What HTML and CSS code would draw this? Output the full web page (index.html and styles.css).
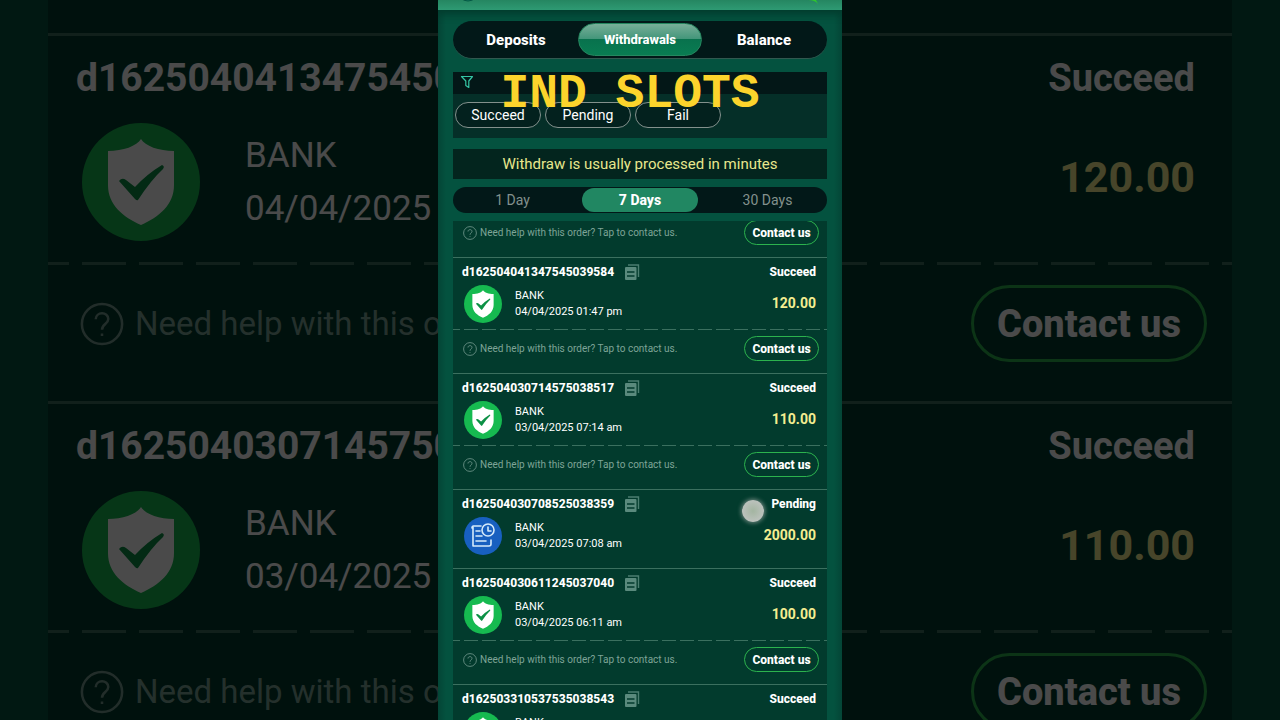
FILE: index.html
```html
<!DOCTYPE html>
<html lang="en">
<head>
  <meta charset="UTF-8" />
  <title>Withdrawals</title>
  <meta name="viewport" content="width=device-width, initial-scale=1.0" />
  <link rel="stylesheet" href="styles.css">
</head>
<body>
  <svg class="symbols" aria-hidden="true">
    <symbol id="shield" viewBox="0 0 118 118">
      <circle cx="59" cy="59" r="59" fill="#16ba50" />
      <path d="M59 16 C63 23 77 28 92 28 V62 C92 82 77 94 59 102 C41 94 26 82 26 62 V28 C41 28 55 23 59 16 Z" fill="#fff" />
      <path d="M37 58 Q40 54 44 57 L53 64 Q65 51 80 42 Q83 43 81 46 Q69 57 56 77 Q55 78 53 76 Z" fill="#0c9045" />
    </symbol>
    <symbol id="pending" viewBox="0 0 38 38">
      <circle cx="19" cy="19" r="19" fill="#1860c0" />
      <g fill="none" stroke="#d5eafa" stroke-width="1.6" stroke-linecap="round" stroke-linejoin="round">
        <path d="M17 9 H10 Q8 9 8 11 M9 9 V29 H25 Q27 29 27 27 V23 M12 24 H22 M12 19 H18 M12 14 H16" />
        <circle cx="24" cy="13" r="6" />
        <path d="M24 10 V14 H27" />
      </g>
    </symbol>
    <symbol id="copy" viewBox="0 0 16 16">
      <path d="M4 1 H14.5 V13" fill="none" stroke="#4b7e70" stroke-width="1.4" />
      <rect x="1" y="3" width="11.5" height="13" rx="1" fill="#5a8a7d" />
      <path d="M3 8 H10.5 M3 12 H10.5" stroke="#033b2e" stroke-width="1.5" />
    </symbol>
    <symbol id="help" viewBox="0 0 14 14">
      <circle cx="7" cy="7" r="6.4" fill="none" stroke="#769c90" stroke-width=".8" />
      <path d="M5 5.5 C5 3 9 3 9 5.4 C9 7 7 7 7 8.8 M7 10 V10.8" fill="none" stroke="#769c90" stroke-width=".8" />
    </symbol>
  </svg>

  <div class="stage">
    <div class="backdrop" aria-hidden="true">
      <div class="orders">
        <div class="order">
          <div class="order-head"><span>d162504041347545039584</span><span class="status">Succeed</span></div>
          <div class="order-body">
            <svg class="order-icon"><use href="#shield" /></svg>
            <p>BANK<br>04/04/2025 01:47 pm</p>
            <strong class="amount">120.00</strong>
          </div>
          <div class="order-help">
            <svg class="help-icon"><use href="#help" /></svg>
            <span>Need help with this order? Tap to contact us.</span>
            <span class="contact">Contact us</span>
          </div>
        </div>
        <div class="order">
          <div class="order-head"><span>d162504030714575038517</span><span class="status">Succeed</span></div>
          <div class="order-body">
            <svg class="order-icon"><use href="#shield" /></svg>
            <p>BANK<br>03/04/2025 07:14 am</p>
            <strong class="amount">110.00</strong>
          </div>
          <div class="order-help">
            <svg class="help-icon"><use href="#help" /></svg>
            <span>Need help with this order? Tap to contact us.</span>
            <span class="contact">Contact us</span>
          </div>
        </div>
      </div>
    </div>

    <main class="phone">
      <header class="topbar">
        <svg viewBox="0 0 404 10">
          <circle cx="30" cy="-9" r="10" fill="#0a8063" stroke="#065744" />
          <path d="M370 0 Q377 0 380 4 L378 0 Z" fill="#2fc52e" />
        </svg>
      </header>

      <nav class="tabs">
        <button>Deposits</button>
        <button class="active">Withdrawals</button>
        <button>Balance</button>
      </nav>

      <section class="filter">
        <div class="filter-head">
          <svg viewBox="0 0 14 14"><path d="M1.5 1.5 H12.5 L8.8 6 V12.5 L5.8 10.5 V6 Z" fill="none" stroke="#35c4a4" stroke-width="1.2" stroke-linejoin="round" /></svg>
        </div>
        <div class="filter-pills">
          <button>Succeed</button>
          <button>Pending</button>
          <button>Fail</button>
        </div>
      </section>

      <p class="notice">Withdraw is usually processed in minutes</p>

      <nav class="days">
        <button>1 Day</button>
        <button class="active">7 Days</button>
        <button>30 Days</button>
      </nav>

      <section class="orders">
        <div class="order scrolled">
          <div class="order-help">
            <svg class="help-icon"><use href="#help" /></svg>
            <span>Need help with this order? Tap to contact us.</span>
            <button class="contact">Contact us</button>
          </div>
        </div>

        <article class="order">
          <div class="order-head">
            <span>d162504041347545039584</span>
            <button class="copy" aria-label="Copy"><svg><use href="#copy" /></svg></button>
            <span class="status">Succeed</span>
          </div>
          <div class="order-body">
            <svg class="order-icon"><use href="#shield" /></svg>
            <p>BANK<br>04/04/2025 01:47 pm</p>
            <strong class="amount">120.00</strong>
          </div>
          <div class="order-help">
            <svg class="help-icon"><use href="#help" /></svg>
            <span>Need help with this order? Tap to contact us.</span>
            <button class="contact">Contact us</button>
          </div>
        </article>

        <article class="order">
          <div class="order-head">
            <span>d162504030714575038517</span>
            <button class="copy" aria-label="Copy"><svg><use href="#copy" /></svg></button>
            <span class="status">Succeed</span>
          </div>
          <div class="order-body">
            <svg class="order-icon"><use href="#shield" /></svg>
            <p>BANK<br>03/04/2025 07:14 am</p>
            <strong class="amount">110.00</strong>
          </div>
          <div class="order-help">
            <svg class="help-icon"><use href="#help" /></svg>
            <span>Need help with this order? Tap to contact us.</span>
            <button class="contact">Contact us</button>
          </div>
        </article>

        <article class="order is-pending">
          <div class="order-head">
            <span>d162504030708525038359</span>
            <button class="copy" aria-label="Copy"><svg><use href="#copy" /></svg></button>
            <span class="status">Pending</span>
          </div>
          <div class="order-body">
            <svg class="order-icon"><use href="#pending" /></svg>
            <p>BANK<br>03/04/2025 07:08 am</p>
            <strong class="amount">2000.00</strong>
          </div>
          <span class="touch"></span>
        </article>

        <article class="order">
          <div class="order-head">
            <span>d162504030611245037040</span>
            <button class="copy" aria-label="Copy"><svg><use href="#copy" /></svg></button>
            <span class="status">Succeed</span>
          </div>
          <div class="order-body">
            <svg class="order-icon"><use href="#shield" /></svg>
            <p>BANK<br>03/04/2025 06:11 am</p>
            <strong class="amount">100.00</strong>
          </div>
          <div class="order-help">
            <svg class="help-icon"><use href="#help" /></svg>
            <span>Need help with this order? Tap to contact us.</span>
            <button class="contact">Contact us</button>
          </div>
        </article>

        <article class="order">
          <div class="order-head">
            <span>d162503310537535038543</span>
            <button class="copy" aria-label="Copy"><svg><use href="#copy" /></svg></button>
            <span class="status">Succeed</span>
          </div>
          <div class="order-body">
            <svg class="order-icon"><use href="#shield" /></svg>
            <p>BANK<br>31/03/2025</p>
          </div>
        </article>
      </section>

      <h1 class="caption">IND SLOTS</h1>
    </main>
  </div>
</body>
</html>
```

FILE: styles.css
```css
* {
  box-sizing: border-box;
  margin: 0;
  padding: 0;
}

body {
  font-family: Roboto, "Liberation Sans", sans-serif;
  background: #000;
  color: #fff;
}

button {
  border: none;
  background: none;
  color: inherit;
  font-family: inherit;
  cursor: pointer;
}

.symbols {
  position: absolute;
  width: 0;
  height: 0;
}

.stage {
  display: grid;
  grid-template-columns: minmax(0, 1fr);
  grid-template-rows: 100vh;
  height: 100vh;
  overflow: hidden;
}

.backdrop,
.phone {
  grid-area: 1 / 1;
  overflow: hidden;
}

/* phone screen */
.phone {
  position: relative;
  justify-self: center;
  display: flex;
  flex-direction: column;
  width: 404px;
  max-width: 100%;
  padding: 0 15px;
  background: linear-gradient(90deg, #044536, #04523f 2%, #04523f 98%, #044536);
}

.topbar {
  flex: none;
  height: 10px;
  margin: 0 -15px 11px;
  background: linear-gradient(#258661, #2e9a73);
  box-shadow: 0 1px 8px 3px #023a2c;
}

.topbar svg {
  display: block;
}

.tabs,
.days {
  flex: none;
  display: grid;
  background: #021818;
}

.tabs {
  grid-template-columns: repeat(3, 1fr);
  height: 38px;
  padding: 2px 1px;
  border-radius: 19px;
  border-bottom: 1px solid #31584f;
  margin-bottom: 13px;
}

.tabs button {
  font-size: 15px;
  font-weight: 800;
  border-radius: 17px;
}

.tabs .active {
  font-size: 13px;
  background: linear-gradient(#78ae98, #43967a 48%, #08724d 50%, #097c52);
  border: 1px solid #25875f;
}

.filter {
  flex: none;
  background: #052f28;
  margin-bottom: 11px;
}

.filter-head {
  height: 22px;
  padding: 3px 7px;
  background: #031717;
}

.filter-head svg {
  display: block;
  width: 14px;
  height: 14px;
}

.filter-pills {
  display: flex;
  gap: 4px;
  padding: 8px 2px 10px;
}

.filter-pills button {
  width: 86px;
  height: 26px;
  font-size: 14px;
  background: #03211e;
  border: 1px solid #83918d;
  border-radius: 13px;
}

.notice {
  flex: none;
  margin-bottom: 8px;
  line-height: 30px;
  font-size: 15px;
  text-align: center;
  color: #e8e78d;
  background: #03251e;
}

.days {
  grid-template-columns: 1fr 116px 1fr;
  gap: 10px;
  height: 26px;
  padding: 1px 0;
  border-radius: 13px;
  margin-bottom: 8px;
}

.days button {
  font-size: 14px;
  color: #83918d;
  border-radius: 12px;
}

.days .active {
  font-weight: 800;
  color: #fff;
  background: #218762;
}

/* order list */
.orders {
  background: #023b2d;
}

.phone .orders {
  flex: 1;
  min-height: 0;
  overflow: hidden;
}

.order {
  position: relative;
  border-top: 1px solid #3b705f;
}

.scrolled {
  margin-top: -9px;
}

.order-head {
  display: flex;
  align-items: center;
  height: 27px;
  padding: 0 11px 0 9px;
  font-size: 12px;
  font-weight: 800;
}

.copy {
  margin-left: 10px;
}

.copy svg {
  display: block;
  width: 16px;
  height: 16px;
}

.status {
  margin-left: auto;
}

.order-body {
  display: flex;
  align-items: center;
  height: 38px;
  padding: 0 11px;
  margin-bottom: 6px;
  font-size: 11px;
  line-height: 16px;
}

.is-pending .order-body {
  margin-bottom: 13px;
}

.order-icon {
  flex: none;
  width: 38px;
  height: 38px;
  margin-right: 13px;
}

.order-body p {
  white-space: nowrap;
}

.amount {
  margin-left: auto;
  padding-bottom: 2px;
  font-size: 14px;
  color: #f4ee91;
}

.order-help {
  display: flex;
  align-items: center;
  height: 44px;
  padding: 7px 8px 12px 10px;
  font-size: 10px;
  white-space: nowrap;
  color: #7ea497;
  background: repeating-linear-gradient(90deg, #3b705f 0 7px, transparent 7px 11px, #3b705f 11px 18px) top / 100% 1px no-repeat;
}

.help-icon {
  flex: none;
  width: 14px;
  height: 14px;
  margin-right: 3px;
}

.contact {
  flex: none;
  width: 75px;
  height: 25px;
  margin-left: auto;
  font-size: 12px;
  font-weight: 800;
  color: #fff;
  border: 1px solid #2cb34e;
  border-radius: 13px;
}

/* finger marker of the screen recording */
.touch {
  position: absolute;
  top: 10px;
  right: 63px;
  width: 22px;
  height: 22px;
  border-radius: 50%;
  background: radial-gradient(#a3b5a1, #bcc2bd 70%);
  box-shadow: 0 0 4px 1px #70877f;
}

.caption {
  position: absolute;
  top: 67px;
  left: 0;
  width: 100%;
  padding-right: 20px;
  text-align: center;
  font-family: "Liberation Mono", "Courier New", monospace;
  font-size: 48px;
  line-height: 54px;
  color: #fcd42c;
}

/* enlarged, dimmed copy behind the phone */
.backdrop {
  padding: 0 48px;
  background: #04523f;
  opacity: .29;
}

.backdrop .orders {
  padding-top: 33px;
}

.backdrop .order {
  border-top-width: 3px;
}

.backdrop .order-head {
  height: 87px;
  padding: 0 37px 4px 28px;
  font-size: 39px;
  font-weight: 700;
}

.backdrop .status {
  font-size: 38px;
}

.backdrop .order-body {
  height: 118px;
  padding: 0 37px 0 34px;
  margin-bottom: 21px;
  font-size: 35px;
  line-height: 53px;
}

.backdrop .order-icon {
  width: 118px;
  height: 118px;
  margin-right: 45px;
}

.backdrop .amount {
  padding-bottom: 9px;
  font-size: 43px;
}

.backdrop .order-help {
  height: 139px;
  padding: 23px 25px 39px 32px;
  font-size: 33px;
  background: repeating-linear-gradient(90deg, #3b705f 0 21px, transparent 21px 34px, #3b705f 34px 57px) top / 100% 3px no-repeat;
}

.backdrop .help-icon {
  width: 44px;
  height: 44px;
  margin-right: 11px;
}

.backdrop .contact {
  width: 236px;
  height: 77px;
  font-size: 38px;
  line-height: 72px;
  text-align: center;
  border-width: 3px;
  border-radius: 39px;
}
```
